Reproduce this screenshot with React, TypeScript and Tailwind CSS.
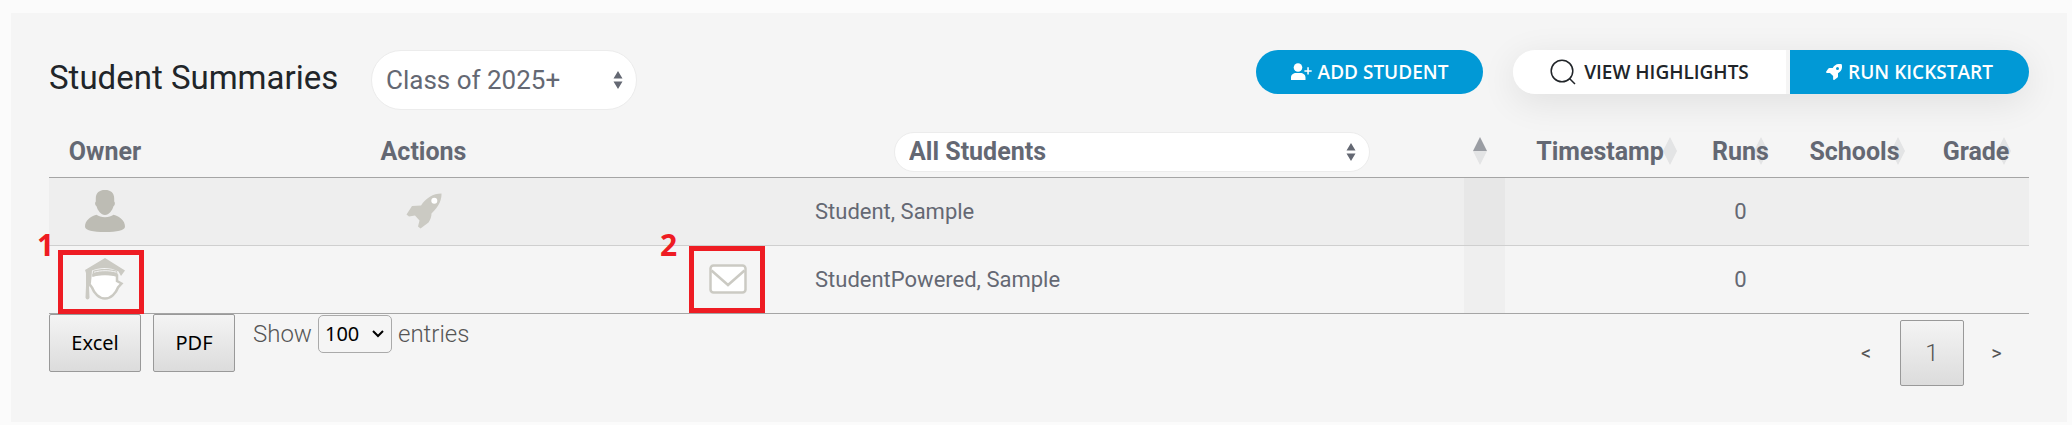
import type { ReactNode } from "react";

const rows = [
  { name: "Student, Sample", runs: 0, owner: "counselor" },
  { name: "StudentPowered, Sample", runs: 0, owner: "student" },
];

function PersonIcon() {
  return (
    <svg viewBox="0 0 40 42" className="mx-auto block h-[42px] w-10" fill="#bdbcb4" aria-hidden="true">
      <path d="M20 0c5.600 0 9.200 2.600 9.200 8.600v3c1.200.8.9 4-.7 4.700C27.300 20.500 24 25 20 25s-7.300-4.500-8.500-8.700c-1.600-.7-1.900-3.900-.7-4.700v-3C10.800 2.600 14.400 0 20 0z" />
      <path d="M11.500 24.800c2.200 1.200 5 2.400 8.500 2.400s6.300-1.200 8.500-2.400C35 26.500 40 31 40 36.500c0 4-8 5.500-20 5.500S0 40.500 0 36.500C0 31 5 26.500 11.500 24.800z" />
    </svg>
  );
}

function GradIcon() {
  return (
    <svg viewBox="0 0 40 42" className="mx-auto block h-[42px] w-10" aria-hidden="true">
      <path d="M7.500 17c7-2 18-2 25 0l.5 6 3 2.500-3 4c-2 5-7 10.500-13 10.500S9 34 7 29l-2-4z" fill="#fff" />
      <path d="M7.500 17.500c7-2 18-2 24.500 0v5.500l4.500 2.500-3.500 4C31 35 26 40.500 20 40.500S9 35 7 29.500l-3-4" fill="none" stroke="#cbcac3" strokeWidth="2.500" />
      <path d="M8 12.800c7-2.300 17-2.300 24 0l1 6c-8-2.500-18-2.500-26 0z" fill="#cbcac3" />
      <path d="M20 0 40 12.500 36 18l-2.500-4.500C25 9 15 9 7 12.500L6 25 4 29l.5 10.500C4 42 1 42 .5 39.500L1 28V15L0 12z" fill="#cbcac3" />
      <path d="M9 14.200c7-2 15-2 22.500 0" fill="none" stroke="#f4f4f4" strokeWidth="1" />
    </svg>
  );
}

function RocketGlyph() {
  return (
    <svg viewBox="0 0 36 36" className="h-9 w-9" aria-hidden="true">
      <path d="M35.500.5c.2 5-1.500 12-10 20 0 3-1 6-3 9L14.500 35.500 12 33.500l1.500-6-4.500-5-6 1-2.500-2L6 13l9-.5C20 5 27 .5 35.500.5z" fill="#cbcac3" />
      <circle cx="28.300" cy="7.700" r="3" fill="#fff" />
    </svg>
  );
}

function MailGlyph() {
  return (
    <svg viewBox="0 0 38 30" className="h-[30px] w-[38px]" aria-hidden="true">
      <rect x="1.500" y="1.500" width="35" height="27" rx="3" fill="#fff" stroke="#cbcac3" strokeWidth="2.500" />
      <path d="M2.500 6.500 19 21 35.500 6.500" fill="none" stroke="#cbcac3" strokeWidth="2.500" />
    </svg>
  );
}

function Updown() {
  return (
    <svg viewBox="0 0 10 18" className="pointer-events-none h-[18px] w-2.5" fill="#646873" aria-hidden="true">
      <path d="M5 0 9.500 7.500h-9zM5 18 .5 10.500h9z" />
    </svg>
  );
}

function SortMark({ active = false }: { active?: boolean }) {
  return (
    <svg viewBox="0 0 14 28" className="absolute top-[5px] right-[18px] h-7 w-3.5" aria-hidden="true">
      <path d="M7 0 14 14H0z" fill={active ? "#9a9da3" : "#646873"} opacity={active ? 1 : 0.12} />
      <path d="M7 28 0 14h14z" fill="#646873" opacity="0.12" />
    </svg>
  );
}

function Marker({ label, box, text }: { label: string; box: string; text: string }) {
  return (
    <>
      <span className={`pointer-events-none absolute border-[5px] border-[#ee1c23] ${box}`} />
      <span className={`pointer-events-none absolute font-['Open_Sans',sans-serif] text-[30px] leading-[30px] font-bold text-[#ee1c23] ${text}`}>
        {label}
      </span>
    </>
  );
}

function HeadCell({ children, active }: { children?: ReactNode; active?: boolean }) {
  return (
    <th scope="col" className="relative p-0 text-center font-bold">
      {children}
      <SortMark active={active} />
    </th>
  );
}

export default function App() {
  return (
    <div className="bg-[#fbfbfb] pt-[13px] pr-[5px] pb-1 pl-[11px] font-[Roboto,sans-serif] text-[#646873]">
      <main className="bg-[#f5f5f5] px-[38px] pt-[37px] pb-9">
        <header className="flex items-start justify-between">
          <div className="flex items-center">
            <h1 className="w-[322px] pb-1 text-[33px] leading-10 whitespace-nowrap text-[#212529]">Student Summaries</h1>
            <div className="relative flex items-center">
              <select aria-label="Class" className="h-[60px] w-[266px] appearance-none rounded-full border border-[#ececec] bg-white px-3.5 text-[26px]">
                <option>Class of 2025+</option>
              </select>
              <span className="pointer-events-none absolute right-3.5"><Updown /></span>
            </div>
          </div>
          <div className="flex font-['Open_Sans',sans-serif] text-[19px] font-semibold">
            <button className="mr-[30px] flex h-11 w-[227px] items-center justify-center gap-1.5 rounded-full bg-[#0199d6] text-white">
              <svg viewBox="0 0 21 18" className="h-[18px] w-[21px]" fill="currentColor" aria-hidden="true">
                <circle cx="7" cy="4.500" r="4.300" />
                <path d="M0 17v-2.500C0 11.500 2.500 10 5 10h4.500c2.500 0 5 1.500 5 4.500V17zM16.300 4.300h1.500v2.900h2.900v1.500h-2.900v2.900h-1.500V8.700h-2.900V7.200h2.900z" />
              </svg>
              ADD STUDENT
            </button>
            <div className="flex gap-1 rounded-full shadow-[0_8px_36px_rgba(0,0,0,0.09)]">
              <button className="flex h-11 w-[273px] items-center justify-center gap-2 rounded-l-full bg-white text-[#212529]">
                <svg viewBox="0 0 26 26" className="h-[26px] w-[26px]" fill="none" stroke="currentColor" strokeWidth="1.500" aria-hidden="true">
                  <circle cx="12" cy="12" r="10.800" />
                  <path d="m19.500 19.500 5.500 5.500" />
                </svg>
                VIEW HIGHLIGHTS
              </button>
              <button className="flex h-11 w-[239px] items-center justify-center gap-1.5 rounded-r-full bg-[#0199d6] text-white">
                <svg viewBox="0 0 512 512" className="h-4 w-4" fill="currentColor" aria-hidden="true">
                  <path fillRule="evenodd" d="M505 19c-1-7-6-11-12-12-125-26-214 11-278 121H112c-16 0-34 11-42 26L3 250c-7 15 4 34 21 34h103l101 101v103c0 17 19 28 34 21l96-67c15-8 26-26 26-42V297C494 233 531 144 505 19zM368 192a48 48 0 1 1 0-96 48 48 0 0 1 0 96z" />
                </svg>
                RUN KICKSTART
              </button>
            </div>
          </div>
        </header>

        <table className="mt-[22px] w-full table-fixed border-collapse text-[22px]">
          <colgroup>
            <col className="w-28" />
            <col className="w-[525px]" />
            <col className="w-[114px]" />
            <col />
            <col className="w-[41px]" />
            <col className="w-[190px]" />
            <col className="w-[91px]" />
            <col className="w-[137px]" />
            <col className="w-[106px]" />
          </colgroup>
          <thead>
            <tr className="h-[45px] border-b border-[#a5a5a5] align-top text-[25px] leading-[40px]">
              <th scope="col" className="p-0 font-bold">Owner</th>
              <th scope="col" className="p-0 font-bold">Actions</th>
              <th scope="col" className="p-0" aria-label="Mail" />
              <th scope="col" className="p-0">
                <div className="mx-auto flex w-[476px] items-center">
                  <select aria-label="Filter students" className="h-10 w-full appearance-none rounded-full border border-[#ececec] bg-white px-3.5 text-[25px] leading-8 font-bold">
                    <option>All Students</option>
                  </select>
                  <span className="pointer-events-none -ml-6"><Updown /></span>
                </div>
              </th>
              <HeadCell active />
              <HeadCell>Timestamp</HeadCell>
              <HeadCell>Runs</HeadCell>
              <HeadCell>Schools</HeadCell>
              <HeadCell>Grade</HeadCell>
            </tr>
          </thead>
          <tbody>
            {rows.map((row) => {
              const powered = row.owner === "student";
              return (
                <tr key={row.name} className={powered ? "h-[68px] border-b border-[#a5a5a5]" : "h-[68px] border-b border-[#cfcfcf] bg-[#eeeeee]"}>
                  <td className="relative p-0">
                    {powered ? <GradIcon /> : <PersonIcon />}
                    {powered && <Marker label="1" box="top-1 left-[9px] h-16 w-[86px]" text="-top-4 -left-3" />}
                  </td>
                  <td className="p-0">
                    {!powered && <button aria-label="Run" className="mx-auto block"><RocketGlyph /></button>}
                  </td>
                  <td className="relative p-0">
                    {powered && (
                      <>
                        <button aria-label="Mail" className="ml-[23px] block"><MailGlyph /></button>
                        <Marker label="2" box="top-0 left-[3px] h-[67px] w-[76px]" text="-top-4 -left-[26px]" />
                      </>
                    )}
                  </td>
                  <td className="px-[15px] py-0">{row.name}</td>
                  <td className={powered ? "bg-[#efefef]" : "bg-[#e7e7e7]"} />
                  <td />
                  <td className="p-0 text-center">{row.runs}</td>
                  <td />
                  <td />
                </tr>
              );
            })}
          </tbody>
        </table>

        <footer className="flex items-start justify-between text-2xl font-light">
          <div className="flex items-start font-['Noto_Sans',sans-serif] text-xl font-normal text-black">
            <button className="mr-3 h-[58px] w-[92px] rounded-xs border border-[#999] bg-linear-to-b from-[#f4f4f4] to-[#dcdcdc]">Excel</button>
            <button className="mr-[18px] h-[58px] w-[82px] rounded-xs border border-[#999] bg-linear-to-b from-[#f4f4f4] to-[#dcdcdc]">PDF</button>
            <label className="flex items-center gap-1.5 pt-px font-[Roboto,sans-serif] text-2xl font-light text-[#555]">
              Show
              <span className="relative flex items-center">
                <select className="h-[38px] w-[74px] appearance-none rounded-[5px] border border-[#aaa] pl-1.5 font-['Noto_Sans',sans-serif] text-xl font-normal text-black">
                  <option>100</option>
                </select>
                <svg viewBox="0 0 12 8" className="pointer-events-none absolute right-2 h-2 w-3" fill="none" stroke="#000" strokeWidth="2" aria-hidden="true">
                  <path d="m1 1 5 5 5-5" />
                </svg>
              </span>
              entries
            </label>
          </div>
          <nav aria-label="Pages" className="mt-1.5 flex items-center text-[#555]">
            <button className="w-[68px] text-xl font-normal">&lt;</button>
            <button className="h-[66px] w-16 rounded-xs border border-[#999] bg-linear-to-b from-[#f4f4f4] to-[#dcdcdc] font-light">1</button>
            <button className="w-[65px] text-xl font-normal">&gt;</button>
          </nav>
        </footer>
      </main>
    </div>
  );
}
